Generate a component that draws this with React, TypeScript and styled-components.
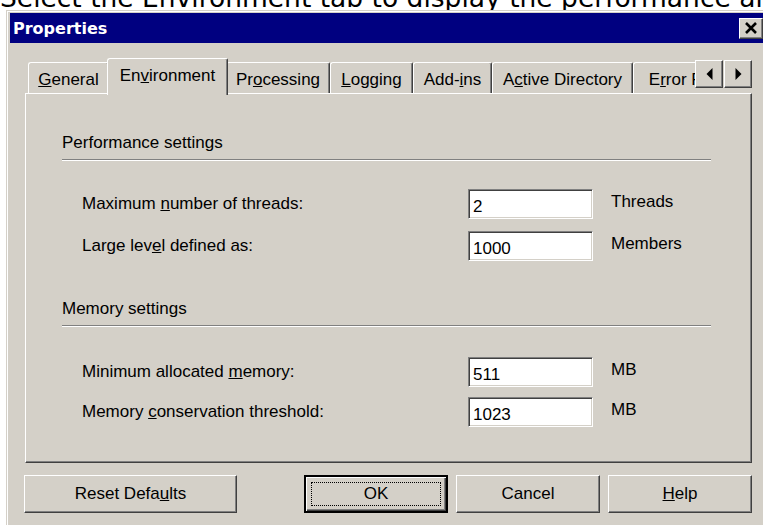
import React from "react";
import styled, { createGlobalStyle, css } from "styled-components";

const face = "#d4d0c8";
const shadow = "#808080";
const darkShadow = "#404040";
const highlight = "#ffffff";

const GlobalStyle = createGlobalStyle`
  html, body {
    margin: 0;
    padding: 0;
    background: #fff;
  }
  body {
    width: 763px;
    height: 525px;
    overflow: hidden;
    font-family: "Liberation Sans", Arial, sans-serif;
    color: #000;
  }
`;

// classic 3d bevels
const raised = css`
  background: ${face};
  border: 1px solid;
  border-color: ${highlight} ${darkShadow} ${darkShadow} ${highlight};
  box-shadow: inset -1px -1px ${shadow};
`;

const sunken = css`
  background: #fff;
  border: 1px solid;
  border-color: ${shadow} ${highlight} ${highlight} ${shadow};
  box-shadow: inset 1px 1px ${darkShadow}, inset -1px -1px ${face};
`;

const Caption = styled.div`
  height: 10px;
  overflow: hidden;
  white-space: nowrap;
  font-family: "DejaVu Sans", Verdana, sans-serif;
  font-size: 26.5px;
  line-height: 28px;
`;

const CaptionText = styled.span`
  display: block;
  margin-top: -16px;
`;

const Dialog = styled.div`
  box-sizing: border-box;
  width: 762px;
  height: 530px;
  margin-left: 6px;
  padding: 2px 3px 0 3px;
  background: ${face};
  border-top: 1px solid ${face};
  border-left: 1px solid ${face};
  box-shadow: inset 1px 1px ${highlight};
`;

const TitleBar = styled.div`
  height: 30px;
  display: flex;
  align-items: center;
  justify-content: space-between;
  padding: 0 2px 0 3px;
  background: #000080;
`;

const TitleText = styled.span`
  font-family: "DejaVu Sans", Tahoma, sans-serif;
  font-weight: bold;
  font-size: 16px;
  color: #fff;
`;

const CloseButton = styled.div`
  ${raised};
  box-sizing: border-box;
  width: 24px;
  height: 21px;
  display: flex;
  align-items: center;
  justify-content: center;
`;

const Body = styled.div`
  padding-left: 15px;
`;

const TabStrip = styled.div`
  position: relative;
  z-index: 1;
  width: 727px;
  height: 37px;
  margin-top: 15px;
  margin-bottom: -2px;
  display: flex;
  align-items: flex-start;
`;

const TabList = styled.div`
  flex: 1;
  height: 37px;
  padding-left: 3px;
  display: flex;
  align-items: flex-end;
  overflow: hidden;
`;

const Tab = styled.div<{ $w: number; $active?: boolean }>`
  box-sizing: border-box;
  flex: none;
  width: ${(p) => p.$w + (p.$active ? 4 : 0)}px;
  height: ${(p) => (p.$active ? 37 : 31)}px;
  margin: ${(p) => (p.$active ? "0 -2px" : "0 0 2px 0")};
  position: relative;
  z-index: ${(p) => (p.$active ? 2 : 1)};
  display: flex;
  align-items: center;
  justify-content: center;
  padding: ${(p) => (p.$active ? "0 0 3px" : "3px 0 0")};
  background: ${face};
  border-top: 1px solid ${highlight};
  border-left: 1px solid ${highlight};
  border-right: 1px solid ${darkShadow};
  border-radius: 3px 2px 0 0;
  box-shadow: inset -1px 0 ${shadow};
  font-size: 17px;
  line-height: 20px;
  white-space: nowrap;
`;

const ScrollButtons = styled.div`
  display: flex;
  gap: 1px;
  margin-top: 2px;
`;

const ScrollButton = styled.div`
  ${raised};
  box-sizing: border-box;
  width: 28px;
  height: 28px;
  display: flex;
  align-items: center;
  justify-content: center;
`;

const Panel = styled.div`
  box-sizing: border-box;
  width: 727px;
  height: 370px;
  padding: 39px 40px 0 36px;
  background: ${face};
  border: 1px solid;
  border-color: ${highlight} ${darkShadow} ${darkShadow} ${highlight};
  box-shadow: inset -1px -1px ${shadow};
`;

const Group = styled.div<{ $top: number }>`
  margin-top: ${(p) => p.$top}px;
`;

const GroupTitle = styled.div`
  font-size: 17px;
  line-height: 20px;
`;

const Rule = styled.div`
  margin-top: 6px;
  border-top: 1px solid ${shadow};
  border-bottom: 1px solid ${highlight};
`;

const Fields = styled.div<{ $top: number; $gap: number }>`
  margin-top: ${(p) => p.$top}px;
  padding-left: 20px;
  display: grid;
  grid-template-columns: 368px 125px auto;
  column-gap: 18px;
  row-gap: ${(p) => p.$gap}px;
`;

const FieldLabel = styled.div`
  align-self: center;
  font-size: 17px;
  line-height: 20px;
  white-space: nowrap;
`;

const Field = styled.input`
  box-sizing: border-box;
  width: 125px;
  height: 30px;
  margin: 0;
  padding: 5px 0 0 4px;
  ${sunken};
  font-family: "Liberation Sans", Arial, sans-serif;
  font-size: 17px;
  color: #000;
  outline: none;
`;

const Unit = styled.div`
  align-self: start;
  margin-top: 3px;
  font-size: 17px;
  line-height: 20px;
`;

const ButtonRow = styled.div`
  width: 728px;
  margin: 12px 0 0 -1px;
  display: flex;
  gap: 8px;
`;

const Button = styled.div<{ $w: number; $default?: boolean }>`
  ${raised};
  box-sizing: border-box;
  width: ${(p) => p.$w}px;
  height: 38px;
  display: flex;
  align-items: center;
  justify-content: center;
  font-size: 17px;
  line-height: 20px;
  ${(p) =>
    p.$default &&
    css`
      border: 2px solid #000;
      box-shadow: inset 1px 1px ${highlight}, inset -1px -1px ${darkShadow},
        inset -2px -2px ${shadow};
    `}
`;

const Spacer = styled.div`
  flex: 1;
`;

const FocusRing = styled.div`
  align-self: stretch;
  flex: 1;
  margin: 5px;
  display: flex;
  align-items: center;
  justify-content: center;
  border: 1px dotted #000;
`;

const CloseGlyph = () => (
  <svg width="14" height="12" viewBox="0 0 14 12">
    <path d="M2 1 L12 11 M12 1 L2 11" stroke="#000" strokeWidth="2.6" />
  </svg>
);

const Arrow = ({ dir }: { dir: "left" | "right" }) => (
  <svg width="7" height="12" viewBox="0 0 7 12">
    {dir === "left" ? (
      <path d="M6.5 0 L0.5 6 L6.5 12 Z" fill="#000" />
    ) : (
      <path d="M0.5 0 L6.5 6 L0.5 12 Z" fill="#000" />
    )}
  </svg>
);

const tabs = [
  { w: 81, label: <><u>G</u>eneral</> },
  { w: 117, label: <>En<u>v</u>ironment</>, active: true },
  { w: 104, label: <>Pr<u>o</u>cessing</> },
  { w: 83, label: <><u>L</u>ogging</> },
  { w: 79, label: <>Add-<u>i</u>ns</> },
  { w: 141, label: <>A<u>c</u>tive Directory</> },
  { w: 110, label: <>E<u>r</u>ror Files</> },
];

export default function App() {
  return (
    <>
      <GlobalStyle />
      <Caption>
        <CaptionText>
          Select the Environment tab to display the performance and memory settings.
        </CaptionText>
      </Caption>
      <Dialog>
        <TitleBar>
          <TitleText>Properties</TitleText>
          <CloseButton>
            <CloseGlyph />
          </CloseButton>
        </TitleBar>
        <Body>
          <TabStrip>
            <TabList>
              {tabs.map((t, i) => (
                <Tab key={i} $w={t.w} $active={t.active}>
                  {t.label}
                </Tab>
              ))}
            </TabList>
            <ScrollButtons>
              <ScrollButton>
                <Arrow dir="left" />
              </ScrollButton>
              <ScrollButton>
                <Arrow dir="right" />
              </ScrollButton>
            </ScrollButtons>
          </TabStrip>
          <Panel>
            <Group $top={0}>
              <GroupTitle>Performance settings</GroupTitle>
              <Rule />
              <Fields $top={28} $gap={12}>
                <FieldLabel>
                  Maximum <u>n</u>umber of threads:
                </FieldLabel>
                <Field defaultValue="2" readOnly />
                <Unit>Threads</Unit>
                <FieldLabel>
                  Large lev<u>e</u>l defined as:
                </FieldLabel>
                <Field defaultValue="1000" readOnly />
                <Unit>Members</Unit>
              </Fields>
            </Group>
            <Group $top={38}>
              <GroupTitle>Memory settings</GroupTitle>
              <Rule />
              <Fields $top={30} $gap={10}>
                <FieldLabel>
                  Minimum allocated <u>m</u>emory:
                </FieldLabel>
                <Field defaultValue="511" readOnly />
                <Unit>MB</Unit>
                <FieldLabel>
                  Memory <u>c</u>onservation threshold:
                </FieldLabel>
                <Field defaultValue="1023" readOnly />
                <Unit>MB</Unit>
              </Fields>
            </Group>
          </Panel>
          <ButtonRow>
            <Button $w={213}>
              Reset Defa<u>u</u>lts
            </Button>
            <Spacer />
            <Button $w={144} $default>
              <FocusRing>OK</FocusRing>
            </Button>
            <Button $w={144}>Cancel</Button>
            <Button $w={144}>
              <u>H</u>elp
            </Button>
          </ButtonRow>
        </Body>
      </Dialog>
    </>
  );
}
